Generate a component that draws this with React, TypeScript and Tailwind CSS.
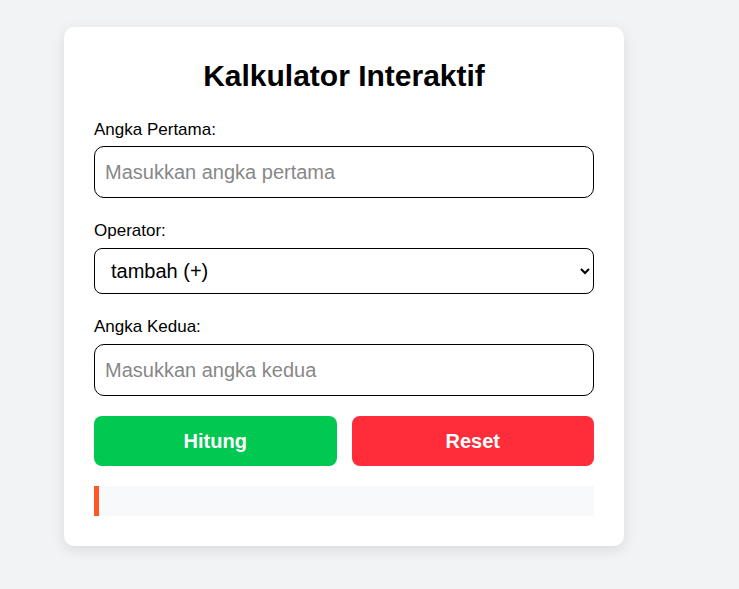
import React, { useState } from 'react';

export default function App() {
  const [a, setA] = useState('');
  const [op, setOp] = useState('tambah');
  const [b, setB] = useState('');
  const [result, setResult] = useState('');

  const hitung = () => {
    const x = parseFloat(a);
    const y = parseFloat(b);
    if (isNaN(x) || isNaN(y)) {
      setResult('Masukkan angka yang valid');
      return;
    }
    let r = 0;
    if (op === 'tambah') r = x + y;
    else if (op === 'kurang') r = x - y;
    else if (op === 'kali') r = x * y;
    else r = y === 0 ? NaN : x / y;
    setResult(isNaN(r) ? 'Tidak bisa dibagi nol' : `Hasil: ${r}`);
  };

  const reset = () => {
    setA('');
    setB('');
    setOp('tambah');
    setResult('');
  };

  return (
    <div
      className="min-h-screen bg-[#f2f3f5] pt-[27px] pl-[64px]"
      style={{ fontFamily: '"Liberation Sans", Arial, sans-serif' }}
    >
      <div className="w-[560px] bg-white rounded-[10px] p-[30px] shadow-[0_4px_14px_rgba(0,0,0,0.1)]">
        <h1 className="text-[30px] leading-[36px] font-bold text-center text-black mb-[26px] pt-[1px]">
          Kalkulator Interaktif
        </h1>

        <div className="mb-[23px]">
          <label className="block text-[17px] leading-[20px] text-black mb-[6px]">Angka Pertama:</label>
          <input
            type="number"
            value={a}
            onChange={(e) => setA(e.target.value)}
            placeholder="Masukkan angka pertama"
            className="block w-full h-[52px] px-[10px] text-[20px] border border-black rounded-[10px] outline-none placeholder:text-[#888]"
          />
        </div>

        <div className="mb-[23px]">
          <label className="block text-[17px] leading-[20px] text-black mb-[7px]">Operator:</label>
          <select
            value={op}
            onChange={(e) => setOp(e.target.value)}
            className="block w-full h-[46px] pl-[12px] pr-[6px] text-[20px] text-black bg-white border border-black rounded-[8px] outline-none"
          >
            <option value="tambah">tambah (+)</option>
            <option value="kurang">kurang (-)</option>
            <option value="kali">kali (×)</option>
            <option value="bagi">bagi (÷)</option>
          </select>
        </div>

        <div className="mb-[20px]">
          <label className="block text-[17px] leading-[20px] text-black mb-[7px]">Angka Kedua:</label>
          <input
            type="number"
            value={b}
            onChange={(e) => setB(e.target.value)}
            placeholder="Masukkan angka kedua"
            className="block w-full h-[52px] px-[10px] text-[20px] border border-black rounded-[10px] outline-none placeholder:text-[#888]"
          />
        </div>

        <div className="flex gap-[15px] mb-[20px]">
          <button
            onClick={hitung}
            className="flex-1 h-[50px] rounded-[8px] bg-[#00c851] text-white text-[20px] font-bold"
          >
            Hitung
          </button>
          <button
            onClick={reset}
            className="flex-1 h-[50px] rounded-[8px] bg-[#ff2c3a] text-white text-[20px] font-bold"
          >
            Reset
          </button>
        </div>

        <div className="h-[30px] bg-[#f8f9fa] border-l-[5px] border-[#ff5722] px-[12px] text-[17px] leading-[30px] text-black">
          {result}
        </div>
      </div>
    </div>
  );
}
